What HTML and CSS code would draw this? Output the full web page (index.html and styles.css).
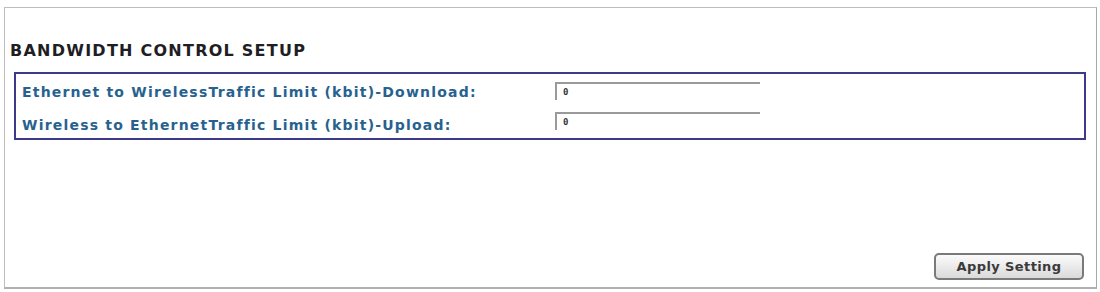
FILE: index.html
```html
<!DOCTYPE html>
<html>
<head>
	<meta charset="UTF-8">
	<title>Bandwidth Control Setup</title>
	<link rel="stylesheet" href="styles.css">
</head>
<body>
	<div class="panel">
		<h2 class="panel-title">BANDWIDTH CONTROL SETUP</h2>
		<div class="group">
			<div class="field">
				<label class="field-label" for="down">Ethernet to WirelessTraffic Limit (kbit)-Download:</label>
				<input class="field-input" type="text" id="down" value="0">
			</div>
			<div class="field">
				<label class="field-label" for="up">Wireless to EthernetTraffic Limit (kbit)-Upload:</label>
				<input class="field-input" type="text" id="up" value="0">
			</div>
		</div>
		<div class="actions">
			<button class="apply-btn" type="button">Apply Setting</button>
		</div>
	</div>
</body>
</html>
```

FILE: styles.css
```css
/* Basic styles */
body {
	margin: 0;
	padding: 7px 3px 3px 4px;
	background-color: #fff;
	font-family: "DejaVu Sans", Verdana, sans-serif;
}
.panel {
	height: 282px;
	box-sizing: border-box;
	border: 1px solid #bdbdbd;
	border-right-color: #a8a8a8;
	border-bottom: 2px solid #b0b0b0;
	padding: 0 10px 0 9px;
	display: flex;
	flex-direction: column;
}
.panel-title {
	margin: 33px 0 12px -4px;
	font-size: 16px;
	line-height: 19px;
	font-weight: bold;
	color: #1e1e24;
	letter-spacing: 1.25px;
}
.group {
	border: 2px solid #3d3a8a;
	padding: 0 0 2px 6px;
}
.field {
	display: flex;
	align-items: flex-start;
	height: 30px;
}
.field + .field {
	height: 32px;
}
.field-label {
	width: 533px;
	margin-top: 10px;
	font-size: 14px;
	line-height: 16px;
	font-weight: bold;
	color: #27628f;
	letter-spacing: 1.2px;
}
.field + .field .field-label {
	margin-top: 13px;
}
.field-input {
	width: 205px;
	height: 18px;
	box-sizing: border-box;
	margin: 8px 0 0 0;
	padding: 0 0 0 6px;
	border: none;
	border-top: 2px solid #9a9a9a;
	border-left: 2px solid #9a9a9a;
	font-family: "DejaVu Sans Mono", monospace;
	font-size: 9px;
	font-weight: bold;
	color: #333;
	background: #fff;
}
.actions {
	margin-top: auto;
	display: flex;
	justify-content: flex-end;
	padding-bottom: 7px;
	margin-right: 2px;
}
.apply-btn {
	width: 150px;
	height: 27px;
	border: 2px solid #7a7a7a;
	border-radius: 5px;
	background: linear-gradient(#fbfbfb, #dadada);
	font-family: "DejaVu Sans", Verdana, sans-serif;
	font-size: 13px;
	font-weight: bold;
	letter-spacing: 0.4px;
	color: #3a3a3a;
	padding: 0;
}
```
